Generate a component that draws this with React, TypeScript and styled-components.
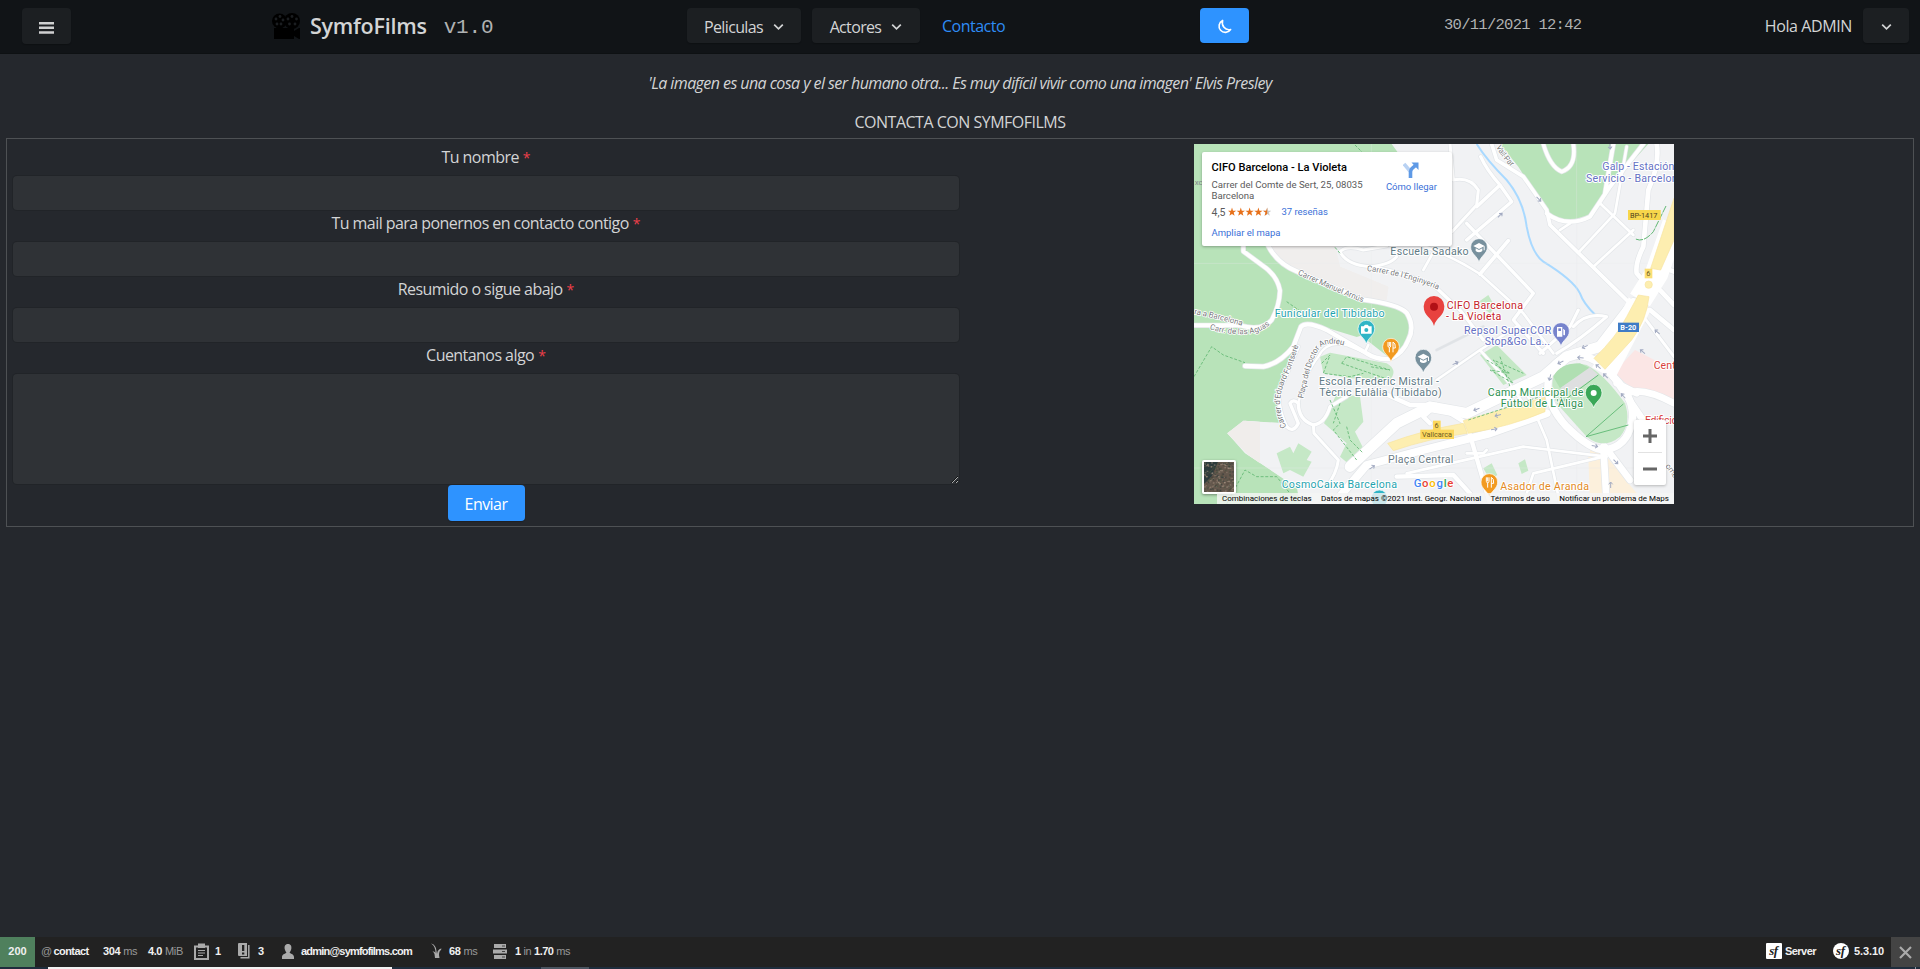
import React from "react";
import styled, { createGlobalStyle } from "styled-components";

const sans = `"Open Sans", "Noto Sans", sans-serif`;
const mono = `"Liberation Mono", monospace`;

const Global = createGlobalStyle`
  * { box-sizing: border-box; }
  html, body { margin: 0; background: #25282d; }
  body { font-family: ${sans}; font-size: 16px; color: #d3d4d5; overflow: hidden; }
  button, input, textarea { font: inherit; color: inherit; border: 0; margin: 0; padding: 0; outline: none; }
`;

const Page = styled.div`
  height: 969px;
  display: flex;
  flex-direction: column;
`;

const Header = styled.header`
  height: 54px;
  flex: none;
  background: #111417;
  border-bottom: 1px solid #0e1113;
  padding: 8px 11px 0 22px;
  display: grid;
  grid-template-columns: 250px 415px 513px 244px 1fr;
  align-items: start;
`;

const Button = styled.button<{ $w: number; $h?: number; $primary?: boolean }>`
  width: ${(p) => p.$w}px;
  height: ${(p) => p.$h ?? 35}px;
  border-radius: 4px;
  background: ${(p) => (p.$primary ? "#2e93ff" : "#1c1f22")};
  color: ${(p) => (p.$primary ? "#fff" : "#d3d4d5")};
  display: flex;
  align-items: center;
  justify-content: center;
  padding-top: 2px;
  box-shadow: 0 1px 1px rgba(0, 0, 0, 0.2);
`;

const Text = styled.span<{ $size?: number; $track?: number; $weight?: number; $italic?: boolean }>`
  font-size: ${(p) => p.$size ?? 16}px;
  letter-spacing: ${(p) => p.$track ?? -0.55}px;
  font-weight: ${(p) => p.$weight ?? 400};
  font-style: ${(p) => (p.$italic ? "italic" : "normal")};
  white-space: pre;
`;

const Brand = styled.div`
  display: flex;
  height: 35px;
  align-items: center;
  svg { margin-right: 10px; margin-top: 1px; }
`;

const Mono = styled.span<{ $size: number; $track: number }>`
  font-family: ${mono};
  font-size: ${(p) => p.$size}px;
  letter-spacing: ${(p) => p.$track}px;
  color: #b0b2b3;
  white-space: pre;
`;

const Version = styled(Mono)`
  margin-left: 17px;
  padding-top: 3px;
`;

const Nav = styled.nav`
  display: flex;
  gap: 11px;
  svg { margin-left: 10px; }
`;

const NavLink = styled.a`
  color: #2e8cf5;
  line-height: 37px;
  margin-left: 11px;
`;

const Account = styled.div`
  display: grid;
  grid-template-columns: 1fr auto 46px;
  column-gap: 11px;
  line-height: 37px;
`;

const Clock = styled(Mono)`
  line-height: 35px;
`;

const Quote = styled.p`
  margin: 17px 0 0;
  height: 24px;
  line-height: 24px;
  text-align: center;
`;

const Title = styled.h1`
  margin: 15px 0 0;
  height: 28px;
  line-height: 24px;
  font-size: 16px;
  font-weight: 400;
  text-align: center;
`;

const Panel = styled.section`
  margin: 0 6px;
  height: 389px;
  border: 1px solid #4e5154;
  padding: 5px 6px;
  display: grid;
  grid-template-columns: 946px 480px;
  column-gap: 235px;
`;

const Form = styled.form`
  display: flex;
  flex-direction: column;
  align-items: center;
`;

const Label = styled.label`
  height: 32px;
  line-height: 26px;
  font-size: 16px;
  letter-spacing: -0.55px;
  &::after { content: "*"; color: #ee3f4a; margin-left: 4px; font-size: 14px; letter-spacing: 0; }
`;

const Input = styled.input`
  width: 100%;
  height: 34px;
  border-radius: 4px;
  background: #2f3236;
  box-shadow: 0 0 0 1px #212428;
`;

const Area = styled.textarea`
  width: 100%;
  height: 110px;
  border-radius: 4px;
  background: #2f3236;
  box-shadow: 0 0 0 1px #212428;
  margin-bottom: 1px;
  resize: vertical;
`;

const MapFrame = styled.div`
  position: relative;
  width: 480px;
  height: 360px;
  overflow: hidden;
  font-family: Roboto, sans-serif;
  > svg { display: block; }
`;

const Card = styled.div`
  position: absolute;
  left: 8px;
  top: 8px;
  width: 250px;
  height: 94px;
  background: #fff;
  border-radius: 2px;
  box-shadow: 0 1px 3px rgba(0, 0, 0, 0.3);
  padding: 7px 15px 0 9.5px;
  display: flex;
  justify-content: space-between;
`;

const CardInfo = styled.div`
  display: flex;
  flex-direction: column;
  font-size: 9.6px;
  line-height: 11px;
  color: #5b5b5b;
  white-space: pre;
`;

const CardTitle = styled.strong`
  font-size: 11.1px;
  line-height: 17px;
  font-weight: 500;
  color: #000;
  margin-bottom: 3px;
`;

const Rating = styled.div`
  display: flex;
  align-items: center;
  height: 14px;
  margin: 4px 0 8px;
  font-size: 10.5px;
  svg { margin: 0 10px 0 3px; }
`;

const MapLink = styled.a`
  color: #3a70d8;
  font-size: 9.5px;
  line-height: 12px;
`;

const Directions = styled.div`
  display: flex;
  flex-direction: column;
  align-items: center;
  padding-top: 3px;
  gap: 3px;
`;

const ZoomBox = styled.div`
  position: absolute;
  right: 8px;
  bottom: 19px;
  width: 32px;
  height: 65px;
  background: #fff;
  border-radius: 2px;
  box-shadow: 0 1px 3px rgba(0, 0, 0, 0.25);
`;

const Satellite = styled.div`
  position: absolute;
  left: 8px;
  bottom: 10px;
  width: 34px;
  height: 34px;
  border: 2px solid #fff;
  border-radius: 2px;
  box-shadow: 0 1px 3px rgba(0, 0, 0, 0.4);
  svg { display: block; }
`;

const Legal = styled.div`
  position: absolute;
  right: 0;
  bottom: 0;
  width: 457px;
  height: 11px;
  background: rgba(245, 245, 245, 0.8);
  font-size: 8px;
  line-height: 11px;
  color: #000;
  display: flex;
  justify-content: space-between;
  padding: 0 5px;
  white-space: pre;
`;

const Spacer = styled.div`
  flex: 1;
`;

const Toolbar = styled.footer`
  height: 30px;
  flex: none;
  background: #222;
  display: flex;
  font: bold 11px/28px "Liberation Sans", Arial, sans-serif;
  color: #f0f0f0;
  white-space: pre;
`;

const Status = styled.div`
  width: 35px;
  background: #4f805d;
  text-align: center;
  margin-right: 6px;
`;

const Item = styled.div<{ $w?: number; $track?: number; $gap?: number }>`
  height: 28px;
  width: ${(p) => (p.$w ? p.$w + "px" : "auto")};
  letter-spacing: ${(p) => p.$track ?? -0.4}px;
  display: flex;
  flex: none;
  align-items: center;
  gap: ${(p) => p.$gap ?? 3}px;
  small { font-size: 11px; font-weight: 400; color: #999; }
`;

const Close = styled.div`
  width: 29px;
  background: #444;
  display: flex;
  align-items: center;
  justify-content: center;
`;

const Desktop = styled.div`
  height: 2px;
  flex: none;
  background: #1f2d3d;
  display: flex;
`;

const Strip = styled.div<{ $left: number; $w: number; $color: string }>`
  margin-left: ${(p) => p.$left}px;
  width: ${(p) => p.$w}px;
  background: ${(p) => p.$color};
`;

const Chevron = () => (
  <svg width="11" height="8" viewBox="0 0 11 8" fill="none" stroke="currentColor" strokeWidth="1.7">
    <path d="M1.2 1.6 5.5 5.9 9.8 1.6" />
  </svg>
);

const Camera = () => (
  <svg width="28" height="26" viewBox="0 0 28 26">
    <circle cx="7.5" cy="8" r="7.5" fill="#000" />
    <circle cx="20" cy="8" r="8" fill="#000" />
    <path d="M2 15h20v3l5-3h1v11h-1l-5-3v3H2z" fill="#000" />
    <g fill="#1b1e21">
      {[[4, 6], [8, 3.5], [11, 7], [9, 11], [5, 11], [16, 6], [20, 3.5], [24.5, 6], [23, 11], [17.5, 11]].map(([x, y], i) => (
        <circle key={i} cx={x} cy={y} r="1.4" />
      ))}
    </g>
  </svg>
);

type Pt = { d: string; w?: number; c?: string };

const roads: Pt[] = [
  { d: "M160 318V334L214 374Q262 405 270 452Q268 500 245 540Q215 575 150 556L12 556", w: 12 },
  { d: "M235 318Q262 370 320 394L515 478Q625 492 650 518Q676 560 655 600Q640 640 600 657Q560 660 530 640L410 570Q350 542 333 560L310 620Q270 670 220 680L165 678", w: 13 },
  { d: "M525 636 535 615", w: 8 },
  { d: "M325 620Q300 680 275 740Q255 790 290 860Q310 880 325 850L300 790Q310 775 325 790Q325 840 370 855Q405 850 420 800L470 770", w: 10 },
  { d: "M325 790Q345 700 385 650Q410 600 470 615L530 640", w: 7 },
  { d: "M370 855 372 880 445 960Q440 1000 410 1040", w: 9 },
  { d: "M450 335Q470 315 520 330L590 318M450 335Q470 375 540 380Q600 375 620 350", w: 9 },
  { d: "M540 380Q660 400 740 445L810 510 880 600", w: 10 },
  { d: "M700 390 728 340M700 318Q790 350 870 402L1000 520 1090 640", w: 8 },
  { d: "M780 12 790 120Q840 110 865 150L860 195 786 275", w: 9 },
  { d: "M872 50Q890 90 930 135L965 185 830 300M930 135 860 200M830 250 1030 460 970 540 1060 640", w: 10 },
  { d: "M955 302 870 402M905 12 920 60 1000 110 1070 210 1080 255 1320 490", w: 11 },
  { d: "M1070 220Q1130 265 1200 230L1260 140 1360 12M1245 160 1270 12", w: 12 },
  { d: "M1060 12Q1080 80 1115 95Q1160 80 1150 12", w: 11 },
  { d: "M1110 270 1140 250M1165 338 1275 220 1310 20M1210 380 1330 270M1230 190 1330 285", w: 8 },
  { d: "M1400 12Q1410 70 1375 150L1360 320Q1335 370 1340 400L1375 440M1410 380 1452 395M1400 440 1452 495M1380 510 1452 570", w: 14 },
  { d: "M870 630 950 720 1000 790M740 720 870 630 980 560", w: 8 },
  { d: "M740 630 880 560", w: 5, c: "#e0e3e6" },
  { d: "M480 980 620 850 720 800 830 820 1060 710 1130 650 1230 620 1330 490", w: 32 },
  { d: "M430 1092 530 975 700 930 900 880 1070 820", w: 24 },
  { d: "M560 750 660 795 740 795 830 850 900 1092M720 850 700 830 740 795M620 1010 790 1005 840 1060", w: 13 },
  { d: "M650 1000 1000 920 1250 950", w: 8 },
  { d: "M830 940 880 940 890 930", w: 8 },
  { d: "M1075 720Q1065 790 1130 860Q1200 930 1245 930Q1310 920 1325 850Q1340 780 1270 710Q1220 645 1150 645Q1080 660 1075 720", w: 22 },
  { d: "M1240 920 1250 1092M1245 920 1320 1020M1270 710 1400 900M1310 760Q1360 740 1452 790M1280 730 1340 760", w: 20 },
  { d: "M1050 640 1140 560 1165 510M1100 640Q1170 600 1250 530Q1190 515 1150 560M1330 490 1452 650", w: 9 },
  { d: "M1010 760 1070 900 1110 1092M1000 1092 1030 1000 1240 950", w: 8 },
];

const dashes = [
  "M12 710 65 620 100 645 165 668",
  "M395 670 420 645 400 700 480 710 520 700",
  "M455 670 470 650 600 690 540 680M455 670 600 720",
  "M110 1092 165 990 200 1010 260 1010 300 1060",
  "M420 780 450 850 430 870 500 960M470 860 480 900 520 940M450 790 430 850",
  "M495 15 540 60M435 322 450 340M290 485 340 520",
  "M890 660 960 700 900 690 970 730 910 660 1000 700M930 650 960 740",
  "M835 840 1065 765",
];

const Pin = ({ x, y, color, children }: { x: number; y: number; color: string; children?: React.ReactNode }) => (
  <g transform={`translate(${x} ${y})`}>
    <path
      d="M0 43C-5 23-25 18-25-3A25 25 0 0 1 25-3C25 18 5 23 0 43Z"
      fill={color}
      stroke="#fff"
      strokeWidth="2"
    />
    {children}
  </g>
);

const Cap = () => (
  <g fill="#fff">
    <path d="M0-15 17-6 0 3-17-6Z" />
    <path d="M-10 1v8q10 8 20 0V1L0 6ZM14-5h3V7h-3Z" />
  </g>
);

const Fork = () => (
  <path
    d="M-9-17v12q0 4 4 4V14M-5-17v12M-1-17v12q0 4-4 4M6 14V-17q8 3 7 18H6"
    fill="none"
    stroke="#fff"
    strokeWidth="3"
  />
);

type Tag = { x: number; y: number; w: number; t: string; c: string; s?: number };
const places: Tag[] = [
  { x: 601, y: 345, w: 235, t: "Escuela Sadako", c: "#5f7b86" },
  { x: 254, y: 532, w: 330, t: "Funicular del Tibidabo", c: "#1fa4b0" },
  { x: 770, y: 507, w: 229, t: "CIFO Barcelona", c: "#c6252c" },
  { x: 768, y: 540, w: 166, t: "- La Violeta", c: "#c6252c" },
  { x: 822, y: 582, w: 262, t: "Repsol SuperCOR", c: "#6672c4" },
  { x: 884, y: 615, w: 196, t: "Stop&Go La...", c: "#6672c4" },
  { x: 1237, y: 91, w: 216, t: "Galp - Estación", c: "#6672c4" },
  { x: 1188, y: 125, w: 275, t: "Servicio - Barcelon", c: "#6672c4" },
  { x: 387, y: 735, w: 360, t: "Escola Frederic Mistral -", c: "#5f7b86" },
  { x: 388, y: 768, w: 367, t: "Tècnic Eulàlia (Tibidabo)", c: "#5f7b86" },
  { x: 893, y: 767, w: 287, t: "Camp Municipal de", c: "#2e9151" },
  { x: 932, y: 800, w: 247, t: "Fútbol de L'Àliga", c: "#2e9151" },
  { x: 594, y: 968, w: 196, t: "Plaça Central", c: "#6b7c86" },
  { x: 275, y: 1044, w: 346, t: "CosmoCaixa Barcelona", c: "#1fa4b0" },
  { x: 931, y: 1051, w: 266, t: "Asador de Aranda", c: "#e38a25" },
  { x: 1391, y: 686, w: 66, t: "Cent", c: "#d9413d" },
  { x: 1365, y: 851, w: 98, t: "Edificio", c: "#d9413d" },
];

const streets = [
  { id: "st1", d: "M323 403Q400 440 525 490", t: "Carrer Manuel Arnús", w: 212 },
  { id: "st2", d: "M530 393Q640 405 745 449", t: "Carrer de l'Enginyeria", w: 222 },
  { id: "st3", d: "M12 522Q80 535 157 558", t: "ra a Barcelona", w: 148 },
  { id: "st4", d: "M58 568Q190 605 244 550", t: "Carr. de las Aguas", w: 190 },
  { id: "st5", d: "M290 860Q255 800 282 730Q312 670 326 614", t: "Carrer d'Eduard Fontserè", w: 256 },
  { id: "st6", d: "M340 776Q370 620 405 615Q430 605 478 622", t: "Plaça del Doctor Andreu", w: 236 },
  { id: "st7", d: "M918 20Q935 55 963 80", t: "Vall-Par", w: 76 },
  { id: "st8", d: "M1425 980Q1445 1000 1465 1040", t: "ome", w: 44 },
];

const MapArt = () => (
  <svg width="480" height="360" viewBox="12 12 1440 1080" fontFamily="Roboto, sans-serif">
    <rect x="12" y="12" width="1440" height="1080" fill="#f1f2f4" />
    <path d="M235 318Q262 370 320 394L440 440 515 478 590 480 595 440 450 380 435 318Z" fill="#f0eeed" />
    <g fill="#b8e3b9">
      <path d="M12 12H605L640 60V100H480L200 318 270 380 520 478Q625 495 650 518Q676 560 650 610L600 655 530 600 400 560Q345 545 333 560L310 620 275 740 260 800 290 850 240 848 165 842 112 880 165 940 320 1040 330 1092H12Z" />
      <path d="M930 12 985 80 1070 215Q1130 265 1200 230L1250 150 1375 12Z" />
    </g>
    <path d="M245 318Q272 365 320 388L440 436 515 472 590 474 595 440 450 380 435 318Z" fill="#f0eeed" />
    <path d="M160 842 290 850Q310 900 300 1030L175 945 112 880Z" fill="#f1f2f4" />
    <path d="M160 842 112 880 175 945 210 970V846Z" fill="#f0edeb" />
    <path d="M160 318H235Q262 370 320 394L270 440Q262 405 214 374L160 334Z" fill="#b8e3b9" />
    <path d="M325 640 340 565 400 575 530 640 520 690 470 625 405 625 345 720 320 800 300 780 275 800 265 780 290 720Z" fill="#f1f2f4" />
    <path d="M470 600 520 585 540 625 520 632Z" fill="#f1f2f4" />
    <path d="M310 880 440 960 430 1060 345 1070 300 1010Z" fill="#f1f2f4" />
    <g fill="#c5e8c6">
      <path d="M390 650 420 638 590 670Q625 690 600 720L480 715 400 700Z" />
      <path d="M440 760 510 770 520 845 495 875 525 935 480 975 450 950 470 910 402 850Z" />
      <path d="M260 940 300 920 310 940 325 910 365 935 350 960 365 965 340 1010 300 990 280 1000Z" />
      <path d="M870 645 920 615 1010 705 940 735Z" />
      <path d="M860 490 895 465 915 500 900 520ZM880 985 905 970 922 1005 900 1020ZM985 970 1005 958 1015 992 995 1002Z" />
    </g>
    <path d="M1270 700 1335 630 1452 690V790L1340 755Z" fill="#fbe6e5" />
    <path d="M1195 950H1250L1340 1060V1092H1200ZM1200 915 1260 940 1200 960Z" fill="#fcf0dc" />
    <path d="M860 12Q890 60 950 120Q1000 180 1010 260Q1025 340 1060 365Q1150 420 1170 460Q1180 490 1217 526" fill="none" stroke="#a9d9ff" strokeWidth="6" />
    <path d="M12 370H1452M12 984H1452M544 12V1092M1160 12V1092" stroke="#e9ebed" strokeWidth="1.5" opacity="0.6" />
    {roads.map((r, i) => (
      <path key={i} d={r.d} fill="none" stroke="#e3e6e9" strokeWidth={(r.w ?? 8) + 4} strokeLinecap="round" strokeLinejoin="round" />
    ))}
    {roads.map((r, i) => (
      <path key={i} d={r.d} fill="none" stroke={r.c ?? "#fff"} strokeWidth={r.w ?? 8} strokeLinecap="round" strokeLinejoin="round" />
    ))}
    <path d="M1350 480 1400 400 1452 250" fill="none" stroke="#fff" strokeWidth="70" />
    <path d="M1240 700 1350 490" fill="none" stroke="#fff" strokeWidth="76" />
    <g fill="#fdeeb0" stroke="#f8e4a0" strokeWidth="2">
      <path d="M1452 175V300L1412 390 1382 385Z" />
      <path d="M1345 465 1377 470Q1370 540 1325 600L1245 688 1212 655Q1280 590 1310 530Z" />
      <path d="M820 842 1065 772V815Q960 860 835 880Z" />
      <path d="M593 910Q700 870 820 850L832 880Q720 895 610 932Z" />
      <circle cx="1376" cy="434" r="11" />
    </g>
    <path d="M1090 710Q1120 660 1190 675Q1240 700 1305 790Q1325 850 1290 890Q1240 930 1190 890L1100 790Q1080 750 1090 710Z" fill="#c5e8c6" />
    <path d="M1090 710Q1110 670 1170 670L1200 685 1110 745Z" fill="#b0dfb2" />
    <path d="M1110 745 1200 682 1225 705 1150 755Z" fill="#dedfe0" />
    <path d="M1188 890 1300 792M1188 890 1315 855M1110 790 1225 705" fill="none" stroke="#55b56c" strokeWidth="2.5" />
    {dashes.map((d, i) => (
      <path key={i} d={d} fill="none" stroke="#62b874" strokeWidth="2.6" strokeDasharray="9 5" />
    ))}
    <path d="M1428 198 1390 275Q1360 310 1335 296" fill="none" stroke="#62b874" strokeWidth="3" strokeDasharray="22 3" />
    <g fill="none" stroke="#a3abc2" strokeWidth="3">
      {[[1112, 667, 155], [1185, 620, 155], [1172, 653, 185], [1080, 712, 105], [860, 808, 160], [924, 826, 165], [912, 868, -10], [1225, 680, 220], [1247, 708, 225], [1300, 768, 230], [1214, 918, 10], [1277, 965, 45], [1262, 1035, -90], [546, 982, -35], [796, 670, -25], [930, 226, -45], [1046, 177, 45], [1358, 635, 220], [1402, 576, 220], [1260, 18, 85]].map(([x, y, a], i) => (
        <path key={i} d="M-9 0H8M2-6 9 0 2 6" transform={`translate(${x} ${y}) rotate(${a})`} />
      ))}
    </g>
    <g fontSize="22" textAnchor="middle">
      <rect x="1314" y="210" width="98" height="30" fill="#f7d64b" />
      <text x="1361" y="233" fill="#4e431d" textLength="82">BP-1417</text>
      <rect x="1364" y="386" width="23" height="29" fill="#fbdf75" />
      <text x="1375" y="409" fill="#6b5a24">6</text>
      <rect x="729" y="842" width="23" height="28" fill="#fbd75d" />
      <text x="740" y="864" fill="#6b5a24">6</text>
      <rect x="691" y="869" width="101" height="28" fill="#fbd75d" />
      <text x="741" y="891" fill="#6b5a24" textLength="90">Vallcarca</text>
      <rect x="1284" y="548" width="63" height="28" fill="#3f7cc6" />
      <text x="1315" y="570" fill="#fff" fontWeight="700" textLength="48">B-20</text>
    </g>
    {streets.map((s) => (
      <g key={s.id}>
        <path id={s.id} d={s.d} fill="none" />
        <text fontSize="24" fill="#77797c" stroke="#fff" strokeWidth="5" strokeLinejoin="round" paintOrder="stroke" textLength={s.w}>
          <textPath href={`#${s.id}`}>{s.t}</textPath>
        </text>
      </g>
    ))}
    <text x="14" y="134" fontSize="24" fill="#838689">xc</text>
    {places.map((p) => (
      <text key={p.t} x={p.x} y={p.y} textLength={p.w} fontSize="32" fill={p.c} stroke="#fff" strokeWidth="6" strokeLinejoin="round" paintOrder="stroke">
        {p.t}
      </text>
    ))}
    <Pin x={867} y={324} color="#77909d"><Cap /></Pin>
    <Pin x={700} y={656} color="#77909d"><Cap /></Pin>
    <Pin x={529} y={569} color="#2fb5c6">
      <path d="M-16-10H-8L-4-15H4L8-10H16V12H-16Z" fill="#fff" />
      <circle r="6" cy="1" fill="#2fb5c6" />
    </Pin>
    <Pin x={603} y={623} color="#f29a20"><Fork /></Pin>
    <Pin x={898} y={1029} color="#f29a20"><Fork /></Pin>
    <Pin x={1113} y={576} color="#7683cc">
      <path d="M-12-15H4V14H-12ZM6-10 12-5V8Q10 12 7 8V-2" fill="#fff" />
      <path d="M-8-11H0V-3H-8Z" fill="#7683cc" />
    </Pin>
    <Pin x={1211} y={761} color="#3aa757"><circle r="9" cy="-2" fill="#fff" /></Pin>
    <Pin x={568} y={1078} color="#2fb5c6" />
    <path d="M732 558C726 532 701 530 701 499A31 31 0 0 1 763 499C763 530 738 532 732 558Z" fill="#e8423f" />
    <circle cx="732" cy="500" r="12" fill="#b11016" />
    <text x="671" y="1041" fontSize="34" fontWeight="500" textLength="119" stroke="#fff" strokeWidth="5" paintOrder="stroke">
      <tspan fill="#4285f4">G</tspan>
      <tspan fill="#ea4335">o</tspan>
      <tspan fill="#fbbc05">o</tspan>
      <tspan fill="#4285f4">g</tspan>
      <tspan fill="#34a853">l</tspan>
      <tspan fill="#ea4335">e</tspan>
    </text>
  </svg>
);

const Stars = () => (
  <svg width="43" height="10" viewBox="0 0 43 10">
    {[0, 1, 2, 3, 4].map((i) => (
      <g key={i} transform={`translate(${i * 8.8} 0)`}>
        <path d="M4 .6 5 3.7H8.2L5.7 5.6 6.6 8.8 4 6.9 1.4 8.8 2.3 5.6-.2 3.7H3Z" fill={i === 4 ? "#c9c9c9" : "#e7711b"} />
        {i === 4 && <path d="M4 .6V6.9L1.4 8.8 2.3 5.6-.2 3.7H3Z" fill="#e7711b" />}
      </g>
    ))}
  </svg>
);

const specks = Array.from({ length: 260 }, (_, i) => ({
  x: (i * 17.3 + i * i * 0.37) % 30,
  y: (i * 11.9 + i * i * 0.73) % 30,
  c: ["#8a7a6b", "#2d3b38", "#a39181", "#55493f", "#46523f"][(i * 7 + (i % 3)) % 5],
}));

const MapView = () => (
  <MapFrame>
    <MapArt />
    <Card>
      <CardInfo>
        <CardTitle>CIFO Barcelona - La Violeta</CardTitle>
        <span>Carrer del Comte de Sert, 25, 08035</span>
        <span>Barcelona</span>
        <Rating>
          4,5
          <Stars />
          <MapLink>37 reseñas</MapLink>
        </Rating>
        <MapLink>Ampliar el mapa</MapLink>
      </CardInfo>
      <Directions>
        <svg width="16" height="16" viewBox="0 0 16 16" fill="none">
          <path d="M1 2 7 9" stroke="#b9d2f3" strokeWidth="3.6" />
          <path d="M7.5 16V10Q7.5 8 9 6.500L13 3" stroke="#5f9ae6" strokeWidth="3.6" />
          <path d="M8.500.5H15.500V8Z" fill="#5f9ae6" />
        </svg>
        <MapLink>Cómo llegar</MapLink>
      </Directions>
    </Card>
    <Satellite>
      <svg width="30" height="30">
        <rect width="30" height="30" fill="#64584d" />
        <path d="M0 0H14L8 14 0 22Z" fill="#2c3b3c" />
        {specks.map((s, i) => (
          <rect key={i} x={s.x} y={s.y} width="1.6" height="1.3" fill={s.c} opacity="0.6" />
        ))}
      </svg>
    </Satellite>
    <ZoomBox>
      <svg width="32" height="65" viewBox="0 0 32 65" stroke="#666" strokeWidth="3">
        <path d="M9 16H23M16 9V23M9 49H23" />
        <path d="M4 32.500H28" stroke="#e2e2e2" strokeWidth="1" />
      </svg>
    </ZoomBox>
    <Legal>
      <span>Combinaciones de teclas</span>
      <span>Datos de mapas ©2021 Inst. Geogr. Nacional</span>
      <span>Términos de uso</span>
      <span>Notificar un problema de Maps</span>
    </Legal>
  </MapFrame>
);

const SymfonyMark = ({ round }: { round?: boolean }) => (
  <svg width="16" height="16" viewBox="0 0 16 16">
    <rect width="16" height="16" rx={round ? 8 : 1} fill="#fff" />
    <text x="7.500" y="11.500" fontFamily="Liberation Serif, serif" fontStyle="italic" fontWeight="700" fontSize="13" textAnchor="middle" fill="#222">
      sf
    </text>
  </svg>
);

export default function App() {
  return (
    <Page>
      <Global />
      <Header>
        <Button $w={49} $h={36}>
          <svg width="15" height="13" viewBox="0 0 15 13" fill="#cfd0d1">
            <path d="M0 1H15V3.500H0ZM0 5.600H15V8.100H0ZM0 10.200H15V12.700H0Z" />
          </svg>
        </Button>
        <Brand>
          <Camera />
          <Text $size={21.5} $weight={600} $track={-0.25}>SymfoFilms</Text>
          <Version $size={21} $track={-0.2}>v1.0</Version>
        </Brand>
        <Nav>
          <Button $w={114}><Text $track={-0.65}>Peliculas</Text><Chevron /></Button>
          <Button $w={108}><Text $track={-0.65}>Actores</Text><Chevron /></Button>
          <NavLink><Text $track={-0.5}>Contacto</Text></NavLink>
        </Nav>
        <Button $w={49} $primary>
          <svg width="15" height="15" viewBox="0 0 16 16" fill="none" stroke="#fff" strokeWidth="1.700" strokeLinejoin="round">
            <path d="M6 1.500A6.700 6.700 0 1 0 14.500 11.200C8.500 12.500 4.500 7 6 1.500Z" />
          </svg>
        </Button>
        <Account>
          <Clock $size={15.5} $track={-0.72}>30/11/2021 12:42</Clock>
          <Text $track={-0.4}>Hola ADMIN</Text>
          <Button $w={46}><Chevron /></Button>
        </Account>
      </Header>
      <Quote>
        <Text $italic $track={-0.57}>'La imagen es una cosa y el ser humano otra... Es muy difícil vivir como una imagen' Elvis Presley</Text>
      </Quote>
      <Title><Text $track={-0.5}>CONTACTA CON SYMFOFILMS</Text></Title>
      <Panel>
        <Form>
          <Label>Tu nombre</Label>
          <Input />
          <Label>Tu mail para ponernos en contacto contigo</Label>
          <Input />
          <Label>Resumido o sigue abajo</Label>
          <Input />
          <Label>Cuentanos algo</Label>
          <Area />
          <Button type="button" $w={77} $h={36} $primary><Text>Enviar</Text></Button>
        </Form>
        <MapView />
      </Panel>
      <Spacer />
      <Toolbar>
        <Status>200</Status>
        <Item $w={62} $gap={2} $track={-0.6}><small>@</small>contact</Item>
        <Item $w={45}>304<small>ms</small></Item>
        <Item $w={46}>4.0<small>MiB</small></Item>
        <Item $w={44} $gap={6}>
          <svg width="15" height="17" viewBox="0 0 15 17" fill="none" stroke="#aaa" strokeWidth="2">
            <path d="M1 3.500H14V16H1Z" />
            <path d="M5 1.500H10V4H5Z" fill="#aaa" />
            <path d="M4 7.500H11M4 10H11M4 12.500H9" strokeWidth="1.200" />
          </svg>
          1
        </Item>
        <Item $w={44} $gap={8}>
          <svg width="12" height="16" viewBox="0 0 12 16">
            <path d="M1 0H9V13H1Q0 13 0 12V1Q0 0 1 0Z" fill="#aaa" />
            <path d="M4 2H6.300V8H4ZM4 9.500H6.300V11.500H4Z" fill="#222" />
            <path d="M10.800 2V14.800H2.500" fill="none" stroke="#aaa" strokeWidth="1.500" />
          </svg>
          3
        </Item>
        <Item $w={149} $gap={7} $track={-0.8}>
          <svg width="12" height="15" viewBox="0 0 12 15" fill="#aaa">
            <path d="M6 0C9 0 9.800 2.500 9.300 5 8.800 7 8 8 7.600 8.600 8 10 12 10 12 13V15H0V13C0 10 4 10 4.400 8.600 4 8 3.200 7 2.700 5 2.200 2.500 3 0 6 0Z" />
          </svg>
          admin@symfofilms.com
        </Item>
        <Item $w={62}>
          <svg width="15" height="16" viewBox="0 0 15 16" fill="#aaa">
            <path d="M0 .5Q5 1.500 5.500 8L6 11Q6.500 6 10.500 5.500L10 7Q8 8 8 12L8.500 15H4L3.500 11Q3 9 1.500 8.500 4 8 4.500 10 4.500 3 0 .5Z" />
          </svg>
          68<small>ms</small>
        </Item>
        <Item $track={-0.55}>
          <svg width="14" height="15" viewBox="0 0 14 15">
            <path d="M1 0H13V4H1ZM0 5.500H14V9.500H0ZM1 11H13V15H1Z" fill="#aaa" />
            <path d="M9 2H12M9 7.500H12M9 13H12" stroke="#444" strokeWidth="1" />
          </svg>
          {"  1"}<small>in</small>1.70<small>ms</small>
        </Item>
        <Spacer />
        <Item $w={67} $gap={3} $track={-0.55}><SymfonyMark />Server</Item>
        <Item $w={58} $gap={5} $track={-0.1}><SymfonyMark round />5.3.10</Item>
        <Close>
          <svg width="13" height="13" viewBox="0 0 13 13" stroke="#aaa" strokeWidth="2.200">
            <path d="M1 1 12 12M12 1 1 12" />
          </svg>
        </Close>
      </Toolbar>
      <Desktop>
        <Strip $left={48} $w={344} $color="#f1f1f1" />
        <Strip $left={149} $w={48} $color="#4b5561" />
        <Strip $left={1326} $w={1} $color="#8b949c" />
      </Desktop>
    </Page>
  );
}
